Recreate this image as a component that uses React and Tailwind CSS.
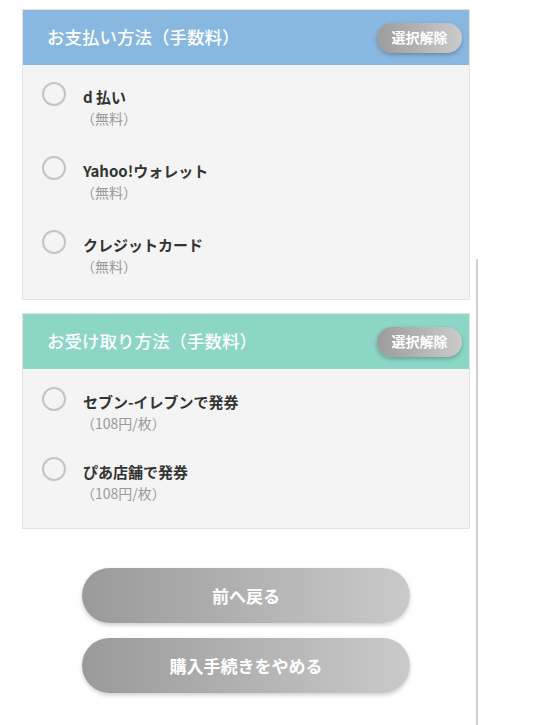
import React from "react";

const jp = { fontFamily: '"Noto Sans CJK JP", "Noto Sans", sans-serif' };

function Item({ label, sub }) {
  return (
    <div className="flex flex-row items-start">
      <div className="w-[24px] h-[24px] rounded-full border-2 border-[#c4c4c4] shrink-0" />
      <div className="ml-[17px] mt-[5px] flex flex-col">
        <div className="text-[15px] leading-[20px] font-bold text-[#333333]">{label}</div>
        <div className="text-[14px] leading-[22px] text-[#9a9a9a] -ml-[2px]">{sub}</div>
      </div>
    </div>
  );
}

function ClearBtn() {
  return (
    <div className="w-[85px] h-[30px] rounded-full bg-gradient-to-r from-[#9c9c9c] to-[#cbcbcb] shadow-[0_2px_4px_rgba(0,0,0,0.25)] flex items-center justify-center text-white text-[14px] font-bold">
      選択解除
    </div>
  );
}

function Panel({ title, color, children, bodyClass }) {
  return (
    <div className="border border-[#e3e3e3] bg-[#f4f4f4]">
      <div className={`h-[55px] flex items-center justify-between pl-[24px] pr-[7px] ${color}`}>
        <div className="text-[17.5px] font-medium text-white">{title}</div>
        <ClearBtn />
      </div>
      <div className={`flex flex-col pl-[19px] ${bodyClass}`}>{children}</div>
    </div>
  );
}

function BigBtn({ children }) {
  return (
    <div className="w-[328px] h-[55px] rounded-full bg-gradient-to-r from-[#9a9a9a] to-[#cacaca] shadow-[0_2px_4px_rgba(0,0,0,0.2)] flex items-center justify-center text-white text-[17px] font-bold">
      {children}
    </div>
  );
}

export default function App() {
  return (
    <div className="w-[556px] h-[725px] bg-white flex flex-row overflow-hidden" style={jp}>
      <div className="ml-[22px] mt-[9px] w-[448px] flex flex-col">
        <Panel title="お支払い方法（手数料）" color="bg-[#88b8e0]" bodyClass="pt-[17px] pb-[22px] gap-[27px]">
          <Item label="d 払い" sub="（無料）" />
          <Item label="Yahoo!ウォレット" sub="（無料）" />
          <Item label="クレジットカード" sub="（無料）" />
        </Panel>
        <div className="h-[13px]" />
        <Panel title="お受け取り方法（手数料）" color="bg-[#8bd6c5]" bodyClass="pt-[18px] pb-[24px] gap-[23px]">
          <Item label="セブン-イレブンで発券" sub="（108円/枚）" />
          <Item label="ぴあ店舗で発券" sub="（108円/枚）" />
        </Panel>
        <div className="mt-[39px] flex flex-col items-center gap-[15px]">
          <BigBtn>前へ戻る</BigBtn>
          <BigBtn>購入手続きをやめる</BigBtn>
        </div>
      </div>
      <div className="ml-[6px] mt-[259px] w-[2px] h-[466px] bg-[#d0d0d0]" />
    </div>
  );
}
